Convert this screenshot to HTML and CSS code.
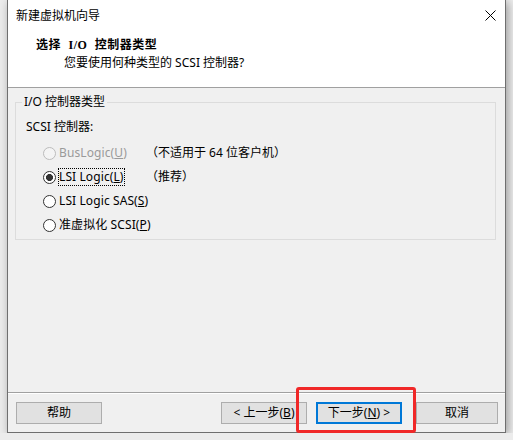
FILE: index.html
```html
<!DOCTYPE html>
<html lang="zh-CN">
<head>
    <meta charset="UTF-8">
    <title>新建虚拟机向导</title>
    <link rel="stylesheet" href="styles.css">
</head>
<body>
    <div class="window">
        <!-- 标题栏 -->
        <div class="titlebar">
            <span class="title">新建虚拟机向导</span>
            <svg class="close" width="11" height="11" viewBox="0 0 11 11">
                <path d="M0.5 0.5 L10.5 10.5 M10.5 0.5 L0.5 10.5" stroke="#000" stroke-width="1" fill="none"/>
            </svg>
        </div>

        <!-- 页眉 -->
        <div class="header">
            <div class="heading">选择 I/O 控制器类型</div>
            <div class="subheading">您要使用何种类型的 SCSI 控制器?</div>
        </div>

        <!-- 内容 -->
        <div class="content">
            <fieldset class="group">
                <legend>I/O 控制器类型</legend>
                <div class="sublabel">SCSI 控制器:</div>
                <div class="options">
                    <div class="option disabled">
                        <div class="choice"><span class="radio"></span><span class="label">BusLogic(<u>U</u>)</span></div>
                        <span class="note">（不适用于 64 位客户机）</span>
                    </div>
                    <div class="option">
                        <div class="choice"><span class="radio checked"></span><span class="label focused">LSI Logic(<u>L</u>)</span></div>
                        <span class="note">（推荐）</span>
                    </div>
                    <div class="option">
                        <div class="choice"><span class="radio"></span><span class="label">LSI Logic SAS(<u>S</u>)</span></div>
                    </div>
                    <div class="option">
                        <div class="choice"><span class="radio"></span><span class="label">准虚拟化 SCSI(<u>P</u>)</span></div>
                    </div>
                </div>
            </fieldset>
        </div>

        <!-- 按钮 -->
        <div class="footer">
            <button class="btn">帮助</button>
            <button class="btn back">&lt; 上一步(<u>B</u>)</button>
            <button class="btn next">下一步(<u>N</u>) &gt;</button>
            <button class="btn cancel">取消</button>
        </div>

        <div class="highlight"></div>
    </div>
</body>
</html>
```

FILE: styles.css
```css
body {
    margin: 0;
    padding: 0 0 0 7px;
    background-color: #ececec;
    font-family: "Noto Sans", "Noto Sans CJK SC", sans-serif;
    font-size: 12px;
    color: #000;
}
.window {
    position: relative;
    width: 497px;
    border: 1px solid #6f6f6f;
    border-top: none;
    background-color: #f0f0f0;
    box-shadow: 2px 2px 9px rgba(0, 0, 0, 0.35);
}
.titlebar {
    height: 31px;
    background-color: #fff;
    display: flex;
    align-items: center;
    justify-content: space-between;
    padding: 0 9px 0 8px;
    line-height: 16px;
}
.close {
    display: block;
}
.header {
    box-sizing: border-box;
    height: 57px;
    background-color: #fff;
    border-bottom: 1px solid #a0a0a0;
    padding: 6px 0 0 28px;
    line-height: 16px;
}
.heading {
    font-family: "Liberation Serif", "Noto Sans CJK SC", serif;
    font-weight: bold;
    font-size: 12px;
    word-spacing: 4px;
    letter-spacing: 0.5px;
}
.subheading {
    margin-top: 2px;
    padding-left: 28px;
}
.content {
    height: 304px;
    box-sizing: border-box;
    padding: 6px 9px 0 7px;
}
.group {
    margin: 0;
    padding: 0 0 2px 6px;
    border: 1px solid #dcdcdc;
}
.group legend {
    padding: 0 2px;
    line-height: 16px;
}
.sublabel {
    margin: 9px 0 0 4px;
    line-height: 16px;
}
.options {
    margin-top: 6px;
    padding-left: 21px;
}
.option {
    display: grid;
    grid-template-columns: 103px auto;
    align-items: center;
    height: 24px;
}
.choice {
    display: flex;
    align-items: center;
    gap: 2px;
    white-space: nowrap;
}
.radio {
    flex: none;
    width: 13px;
    height: 13px;
    box-sizing: border-box;
    border: 1px solid #333;
    border-radius: 50%;
    background-color: #fff;
}
.radio.checked {
    background: radial-gradient(circle, #333 3.2px, #fff 3.8px);
}
.label {
    border: 1px dotted transparent;
    line-height: 16px;
    letter-spacing: 0.1px;
}
.label.focused {
    border-color: #000;
}
.option.disabled .radio {
    border-color: #bcbcbc;
    background-color: #f4f4f4;
}
.option.disabled .label {
    color: #9a9a9a;
}
.note {
    line-height: 16px;
    white-space: nowrap;
}
.footer {
    display: flex;
    border-top: 1px solid #a0a0a0;
    box-shadow: inset 0 1px 0 #fff;
    padding: 9px 7px 8px 8px;
}
.btn {
    width: 86px;
    height: 22px;
    box-sizing: border-box;
    border: 1px solid #adadad;
    background-color: #e1e1e1;
    font-family: inherit;
    font-size: 12px;
    line-height: 18px;
    padding: 0;
    color: #000;
}
.back {
    margin-left: auto;
}
.next {
    margin-left: 9px;
    border: 2px solid #0078d7;
}
.cancel {
    width: 82px;
    margin-left: 14px;
}
.highlight {
    position: absolute;
    left: 288px;
    top: 387px;
    width: 120px;
    height: 46px;
    box-sizing: border-box;
    border: 3px solid #f02828;
    border-radius: 3px;
}
```
